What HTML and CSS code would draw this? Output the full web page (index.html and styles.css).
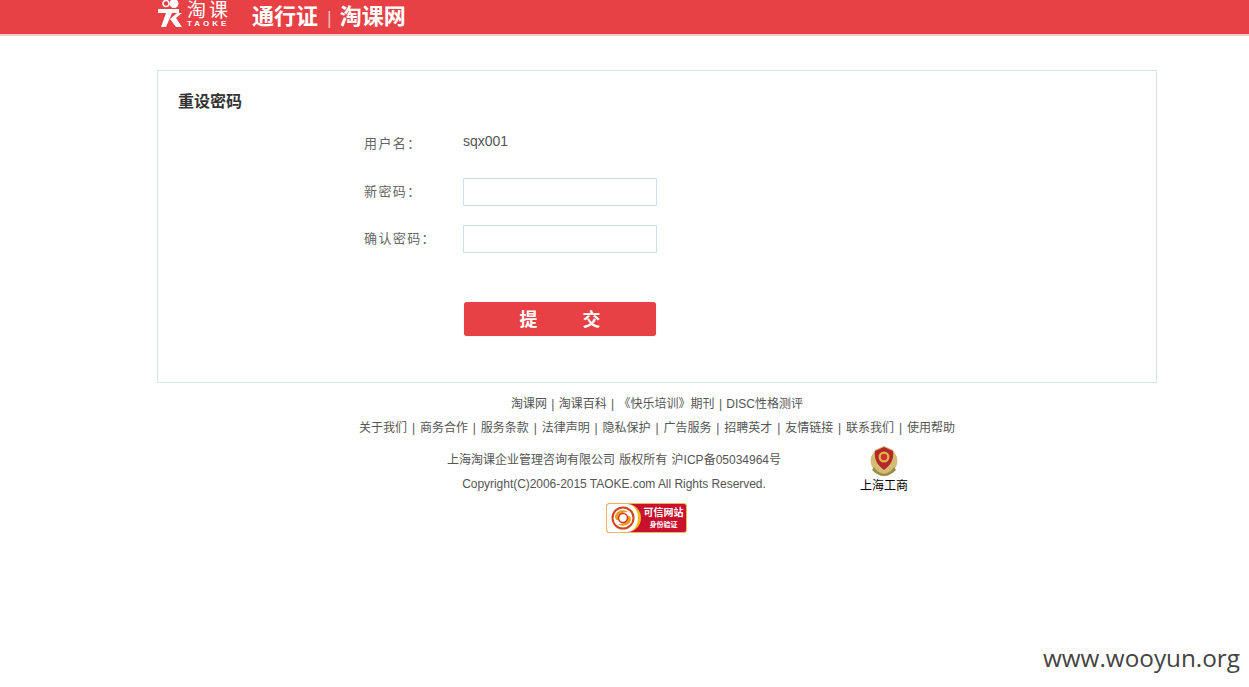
FILE: index.html
```html
<!DOCTYPE html>
<html lang="zh-CN">
<head>
<meta charset="UTF-8">
<meta name="viewport" content="width=device-width, initial-scale=1.0">
<title>通行证 | 淘课网</title>
<link rel="stylesheet" href="styles.css">
</head>
<body>
    <div class="header">
        <div class="wrap header-inner">
            <div class="logo">
                <svg class="logo-mark" width="26" height="28" viewBox="0 0 26 28">
                    <circle cx="9" cy="3.5" r="3" fill="none" stroke="#fff" stroke-width="1.5"/>
                    <circle cx="17" cy="3.5" r="4.5" fill="#fff"/>
                    <path d="M1 9H22V13H15L9 27H4L9 13H1Z" fill="#fff"/>
                    <path d="M13 19L20 13H25L19 18L25 27H19Z" fill="#fff"/>
                </svg>
                <div class="logo-text">
                    <div class="logo-cn">淘课</div>
                    <div class="logo-en">TAOKE</div>
                </div>
            </div>
            <div class="site-title">通行证<span class="site-sep">|</span>淘课网</div>
        </div>
    </div>

    <div class="wrap card">
        <h2 class="card-title">重设密码</h2>
        <form class="reset-form">
            <div class="row row-name">
                <label class="row-label">用户名：</label>
                <span class="row-value">sqx001</span>
            </div>
            <div class="row row-pass">
                <label class="row-label" for="newpass">新密码：</label>
                <input class="row-input" type="password" id="newpass">
            </div>
            <div class="row row-pass">
                <label class="row-label" for="confirmpass">确认密码：</label>
                <input class="row-input" type="password" id="confirmpass">
            </div>
            <button class="submit-btn" type="button">提<span class="submit-gap"></span>交</button>
        </form>
    </div>

    <div class="footer">
        <p class="footer-links links-short">淘课网 | 淘课百科 | 《快乐培训》期刊 | DISC性格测评</p>
        <p class="footer-links links-long">关于我们 | 商务合作 | 服务条款 | 法律声明 | 隐私保护 | 广告服务 | 招聘英才 | 友情链接 | 联系我们 | 使用帮助</p>
        <div class="footer-info">
            <div class="copyright">
                <p class="copy-cn">上海淘课企业管理咨询有限公司 版权所有 沪ICP备05034964号</p>
                <p class="copy-en">Copyright(C)2006-2015 TAOKE.com All Rights Reserved.</p>
            </div>
            <div class="gongshang">
                <svg width="32" height="32" viewBox="0 0 32 32">
                    <path d="M3 12C1 20 6 28 16 31C26 28 31 20 29 12L25 5L16 1L7 5Z" fill="#d3bd74"/>
                    <path d="M16 2L25 6C26 14 23 20 16 25C9 20 6 14 7 6Z" fill="#b3262a"/>
                    <circle cx="16" cy="12" r="5.5" fill="#e0b64a"/>
                    <circle cx="16" cy="12" r="3.2" fill="#c8352f"/>
                    <path d="M6 22C9 27 13 28 16 29C19 28 23 27 26 22L28 25C24 29 20 31 16 31C12 31 8 29 4 25Z" fill="#9c8b4a"/>
                </svg>
                <div class="gongshang-text">上海工商</div>
            </div>
        </div>
        <div class="trust-badge">
            <div class="trust-left">
                <svg width="26" height="26" viewBox="0 0 26 26">
                    <circle cx="13" cy="13" r="10.5" fill="none" stroke="#d3411e" stroke-width="2"/>
                    <path d="M5 11C7 5 14 4 18 7C15 7 10 8 9 13C8 17 5 15 5 11Z" fill="#ef9a1f"/>
                    <path d="M21 15C19 21 12 22 8 19C11 19 16 18 17 13C18 9 21 11 21 15Z" fill="#ef9a1f"/>
                    <circle cx="13" cy="13" r="4.5" fill="none" stroke="#d3411e" stroke-width="1.6"/>
                </svg>
            </div>
            <div class="trust-right">
                <div class="trust-top">可信网站</div>
                <div class="trust-sub">身份验证</div>
            </div>
        </div>
    </div>

    <div class="watermark">www.wooyun.org</div>
</body>
</html>
```

FILE: styles.css
```css
body {
    margin: 0;
    background: #fff;
    font-family: "Liberation Sans", "Noto Sans CJK SC", sans-serif;
    font-size: 12px;
    color: #555;
    height: 687px;
    overflow: hidden;
    position: relative;
}

p {
    margin: 0;
}

.wrap {
    width: 1000px;
    margin-left: 157px;
    box-sizing: border-box;
}

.header {
    height: 34px;
    background: #e74146;
    border-bottom: 2px solid #f3c9cb;
}

.header-inner {
    display: flex;
    align-items: center;
    height: 34px;
    color: #fff;
}

.logo {
    display: flex;
    align-items: center;
    width: 95px;
}

.logo-mark {
    margin-right: 4px;
    margin-top: -6px;
}

.logo-text {
    width: 44px;
    margin-top: -5px;
}

.logo-cn {
    font-size: 19px;
    line-height: 18px;
    letter-spacing: 3px;
    white-space: nowrap;
}

.logo-en {
    font-size: 8px;
    font-weight: bold;
    line-height: 8px;
    letter-spacing: 3px;
    white-space: nowrap;
}

.site-title {
    font-size: 22px;
    font-weight: bold;
    line-height: 30px;
    white-space: nowrap;
}

.site-sep {
    font-weight: normal;
    font-size: 18px;
    color: #f3bcbd;
    margin: 0 8px 0 9px;
}

.card {
    margin-top: 34px;
    height: 313px;
    border: 1px solid #d5e2ee;
    padding: 21px 20px 20px;
}

.card-title {
    margin: 0;
    font-size: 16px;
    line-height: 20px;
    color: #333;
    font-weight: bold;
}

.reset-form {
    margin-left: 186px;
    padding-top: 16px;
}

.row {
    display: flex;
    align-items: center;
}

.row-name {
    height: 28px;
    margin-bottom: 22px;
}

.row-pass {
    height: 28px;
    margin-bottom: 19px;
}

.row-label {
    width: 99px;
    font-family: "Noto Sans CJK TC", sans-serif;
    font-size: 13px;
    color: #666;
    white-space: nowrap;
    letter-spacing: 1.4px;
}

.row-pass .row-label {
    margin-top: -4px;
}

.row-value {
    font-size: 14px;
    color: #555;
    margin-top: -3px;
}

.row-input {
    width: 194px;
    height: 28px;
    box-sizing: border-box;
    border: 1px solid #cfe0ec;
    background: #fff;
    padding: 0 6px;
    margin: 0;
}

.submit-btn {
    display: block;
    width: 192px;
    height: 34px;
    margin: 49px 0 0 100px;
    padding: 0 0 2px;
    border: none;
    border-radius: 3px;
    background: #e74146;
    box-shadow: 0 0 1px #c9a0a0;
    color: #fff;
    font-family: inherit;
    font-size: 18px;
    font-weight: bold;
    cursor: pointer;
}

.submit-gap {
    display: inline-block;
    width: 45px;
}

.footer {
    width: 1000px;
    margin: 9px 0 0 157px;
    text-align: center;
}

.footer-links {
    line-height: 24px;
    color: #555;
}

.links-short {
    word-spacing: 1px;
}

.links-long {
    word-spacing: 1.55px;
}

.footer-info {
    display: flex;
    margin-top: 8px;
}

.copyright {
    width: 914px;
    line-height: 24px;
}

.copy-cn {
    word-spacing: 1px;
}

.copy-en {
    letter-spacing: -0.04px;
}

.gongshang {
    width: 0;
    margin-left: -211px;
    margin-top: -3px;
    white-space: nowrap;
    color: #000;
}

.gongshang svg {
    display: block;
    margin-left: 8px;
}

.gongshang-text {
    text-align: left;
    line-height: 14px;
    margin-top: 2px;
}

.trust-badge {
    display: flex;
    width: 81px;
    height: 30px;
    margin: 7px 0 0 449px;
    box-sizing: border-box;
    border: 1px solid #eab75c;
    border-radius: 3px;
    overflow: hidden;
    background: #c9102c;
}

.trust-left {
    display: flex;
    align-items: center;
    justify-content: center;
    width: 34px;
    background: #fff;
    border-right: 3px solid #f5b81f;
    border-radius: 0 14px 14px 0;
    flex-shrink: 0;
    box-sizing: border-box;
}

.trust-right {
    flex: 1;
    color: #fff;
    font-weight: bold;
    text-align: center;
    padding-top: 2px;
}

.trust-top {
    font-size: 10px;
    line-height: 14px;
    white-space: nowrap;
}

.trust-sub {
    font-size: 7px;
    line-height: 10px;
    white-space: nowrap;
}

.watermark {
    position: absolute;
    right: 9px;
    bottom: 14px;
    font-family: "Open Sans", sans-serif;
    font-size: 24.3px;
    line-height: 30px;
    color: #444;
}
```
